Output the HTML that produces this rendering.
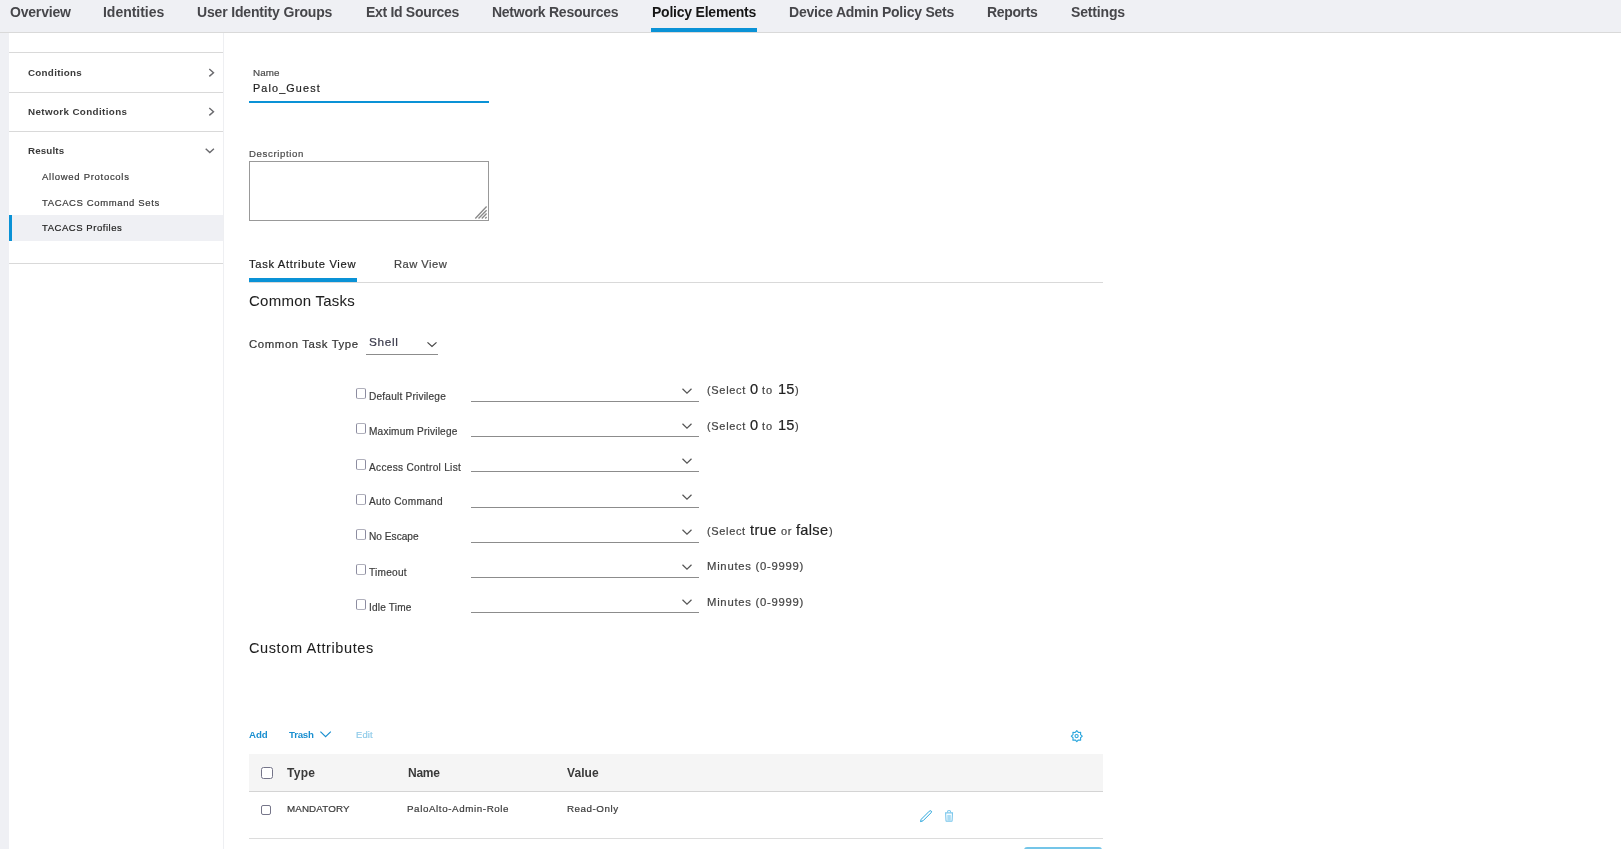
<!DOCTYPE html>
<html><head><meta charset="utf-8">
<style>
html,body{margin:0;padding:0;}
body{width:1621px;height:849px;overflow:hidden;background:#fff;position:relative;font-family:"Liberation Sans",sans-serif;}
.a{position:absolute;}
.t{position:absolute;white-space:nowrap;line-height:1;-webkit-font-smoothing:antialiased;will-change:transform;font-family:"Liberation Sans",sans-serif;}
.cb{position:absolute;box-sizing:border-box;border:1px solid #9c9cac;border-color:#b0b0bc #8c8ca0;border-radius:2px;background:#fff;}
.ul{position:absolute;height:1px;background:#8c8c8c;}
svg{position:absolute;overflow:visible;}
</style></head>
<body>
<!-- nav -->
<div class="a" style="left:0;top:0;width:1621px;height:32px;background:#eff0f4;"></div>
<div class="a" style="left:0;top:32px;width:1621px;height:1px;background:#d9d9d9;"></div>
<div class="a" style="left:651px;top:28px;width:106px;height:4px;background:#0a92d6;"></div>
<!-- left strip -->
<div class="a" style="left:0;top:33px;width:9px;height:816px;background:#eff0f4;"></div>
<!-- sidebar -->
<div class="a" style="left:223px;top:33px;width:1px;height:816px;background:#eeeff2;"></div>
<div class="a" style="left:9px;top:52px;width:214px;height:1px;background:#d9d9d9;"></div>
<div class="a" style="left:9px;top:92px;width:214px;height:1px;background:#d9d9d9;"></div>
<div class="a" style="left:9px;top:131px;width:214px;height:1px;background:#d9d9d9;"></div>
<div class="a" style="left:9px;top:263px;width:214px;height:1px;background:#d9d9d9;"></div>
<div class="a" style="left:9px;top:215px;width:214px;height:26px;background:#eff0f4;"></div>
<div class="a" style="left:9px;top:215px;width:3px;height:26px;background:#0a92d6;"></div>
<svg style="left:0;top:0" width="1" height="1">
 <polyline points="209.3,69 213.5,72.7 209.3,76.4" fill="none" stroke="#6a6a6e" stroke-width="1.4"/>
 <polyline points="209.3,108 213.5,111.7 209.3,115.4" fill="none" stroke="#6a6a6e" stroke-width="1.4"/>
 <polyline points="205.7,148.8 209.8,152.6 213.9,148.8" fill="none" stroke="#6a6a6e" stroke-width="1.4"/>
</svg>
<!-- name -->
<div class="a" style="left:249px;top:101px;width:240px;height:2px;background:#0a92d6;"></div>
<!-- description textarea -->
<div class="a" style="left:249px;top:161px;width:240px;height:60px;box-sizing:border-box;border:1px solid #999;"></div>
<svg style="left:0;top:0" width="1" height="1">
 <line x1="475.3" y1="218.5" x2="486.6" y2="206.5" stroke="#8a8a8a" stroke-width="1.35"/>
 <line x1="478.5" y1="218.5" x2="486.6" y2="210.2" stroke="#8a8a8a" stroke-width="1.35"/>
 <line x1="481.8" y1="218.5" x2="486.6" y2="213.5" stroke="#8a8a8a" stroke-width="1.35"/>
 <line x1="485.2" y1="218.5" x2="486.6" y2="217" stroke="#8a8a8a" stroke-width="1.35"/>
</svg>
<!-- tabs -->
<div class="a" style="left:249px;top:282px;width:854px;height:1px;background:#d9d9d9;"></div>
<div class="a" style="left:249px;top:278px;width:108px;height:4px;background:#0a92d6;"></div>
<!-- shell select -->
<div class="ul" style="left:366px;top:354px;width:72px;"></div>
<svg style="left:0;top:0" width="1" height="1">
 <polyline points="427.5,342.4 432,346.4 436.5,342.4" fill="none" stroke="#444" stroke-width="1.2"/>
</svg>
<div class="cb" style="left:356px;top:388px;width:10px;height:11px;"></div>
<div class="ul" style="left:471px;top:401px;width:228px;"></div>
<svg style="left:0;top:0" width="1" height="1"><polyline points="682.5,388.8 687,393.1 691.5,388.8" fill="none" stroke="#555" stroke-width="1.2"/></svg>
<div class="cb" style="left:356px;top:423px;width:10px;height:11px;"></div>
<div class="ul" style="left:471px;top:436px;width:228px;"></div>
<svg style="left:0;top:0" width="1" height="1"><polyline points="682.5,423.8 687,428.1 691.5,423.8" fill="none" stroke="#555" stroke-width="1.2"/></svg>
<div class="cb" style="left:356px;top:459px;width:10px;height:11px;"></div>
<div class="ul" style="left:471px;top:471px;width:228px;"></div>
<svg style="left:0;top:0" width="1" height="1"><polyline points="682.5,458.8 687,463.1 691.5,458.8" fill="none" stroke="#555" stroke-width="1.2"/></svg>
<div class="cb" style="left:356px;top:494px;width:10px;height:11px;"></div>
<div class="ul" style="left:471px;top:507px;width:228px;"></div>
<svg style="left:0;top:0" width="1" height="1"><polyline points="682.5,494.8 687,499.1 691.5,494.8" fill="none" stroke="#555" stroke-width="1.2"/></svg>
<div class="cb" style="left:356px;top:529px;width:10px;height:11px;"></div>
<div class="ul" style="left:471px;top:542px;width:228px;"></div>
<svg style="left:0;top:0" width="1" height="1"><polyline points="682.5,529.8 687,534.1 691.5,529.8" fill="none" stroke="#555" stroke-width="1.2"/></svg>
<div class="cb" style="left:356px;top:564px;width:10px;height:11px;"></div>
<div class="ul" style="left:471px;top:577px;width:228px;"></div>
<svg style="left:0;top:0" width="1" height="1"><polyline points="682.5,564.8 687,569.1 691.5,564.8" fill="none" stroke="#555" stroke-width="1.2"/></svg>
<div class="cb" style="left:356px;top:599px;width:10px;height:11px;"></div>
<div class="ul" style="left:471px;top:612px;width:228px;"></div>
<svg style="left:0;top:0" width="1" height="1"><polyline points="682.5,599.8 687,604.1 691.5,599.8" fill="none" stroke="#555" stroke-width="1.2"/></svg>

<!-- toolbar -->
<svg style="left:0;top:0" width="1" height="1">
 <polyline points="320.4,731.6 325.6,736.6 330.8,731.6" fill="none" stroke="#1a8fd0" stroke-width="1.2"/>
</svg>
<svg style="left:1070px;top:729px" width="14" height="14" viewBox="0 0 14 14">
 <path d="M6.80,1.70 L8.35,3.46 L10.69,3.31 L10.54,5.65 L12.30,7.20 L10.54,8.75 L10.69,11.09 L8.35,10.94 L6.80,12.70 L5.25,10.94 L2.91,11.09 L3.06,8.75 L1.30,7.20 L3.06,5.65 L2.91,3.31 L5.25,3.46 Z" fill="none" stroke="#2aa6dd" stroke-width="1.1" stroke-linejoin="round"/>
 <circle cx="6.6" cy="7.1" r="1.6" fill="none" stroke="#2aa6dd" stroke-width="1.1"/>
</svg>
<!-- table -->
<div class="a" style="left:249px;top:754px;width:854px;height:37px;background:#f5f5f5;"></div>
<div class="a" style="left:249px;top:791px;width:854px;height:1px;background:#d4d4d4;"></div>
<div class="a" style="left:249px;top:838px;width:854px;height:1px;background:#dcdcdc;"></div>
<div class="cb" style="left:261px;top:767px;width:12px;height:12px;border:1.3px solid #747489;border-radius:2.5px;"></div>
<div class="cb" style="left:261px;top:805px;width:10px;height:10px;border:1.2px solid #76768a;"></div>
<svg style="left:919px;top:809px" width="15" height="14" viewBox="0 0 15 14">
 <path d="M2.2,10.3 L10.3,2.2 Q11.2,1.3 12.2,2 Q12.9,2.8 12.1,3.7 L4,11.8 L1.5,12.6 Z" fill="none" stroke="#2aa6dd" stroke-width="1"/>
</svg>
<svg style="left:944px;top:809px" width="10" height="14" viewBox="0 0 10 14">
 <path d="M3.4,3.4 Q3.4,1.5 5.05,1.5 Q6.7,1.5 6.7,3.4" fill="none" stroke="#7cc7ec" stroke-width="1.1"/>
 <path d="M1.6,3.9 L8.5,3.9 L8.1,11.6 Q8,12.3 7.3,12.3 L2.8,12.3 Q2.1,12.3 2,11.6 Z" fill="none" stroke="#7cc7ec" stroke-width="1.1"/>
 <rect x="3.3" y="5.9" width="3.5" height="6" fill="#a9dbf3"/>
</svg>
<div class="a" style="left:1024px;top:847px;width:78px;height:10px;background:#74c5e8;border-radius:3px;"></div>
<div class="t" style="left:9.60px;top:5.45px;font-size:14px;font-weight:700;color:#46464a;letter-spacing:-0.196px;-webkit-text-stroke:0px currentColor;">Overview</div>
<div class="t" style="left:103.30px;top:5.45px;font-size:14px;font-weight:700;color:#46464a;letter-spacing:-0.019px;-webkit-text-stroke:0px currentColor;">Identities</div>
<div class="t" style="left:197.40px;top:5.45px;font-size:14px;font-weight:700;color:#46464a;letter-spacing:-0.162px;-webkit-text-stroke:0px currentColor;">User Identity Groups</div>
<div class="t" style="left:365.50px;top:5.45px;font-size:14px;font-weight:700;color:#46464a;letter-spacing:-0.305px;-webkit-text-stroke:0px currentColor;">Ext Id Sources</div>
<div class="t" style="left:491.70px;top:5.45px;font-size:14px;font-weight:700;color:#46464a;letter-spacing:-0.264px;-webkit-text-stroke:0px currentColor;">Network Resources</div>
<div class="t" style="left:651.50px;top:5.45px;font-size:14px;font-weight:700;color:#161616;letter-spacing:-0.221px;-webkit-text-stroke:0px currentColor;">Policy Elements</div>
<div class="t" style="left:788.50px;top:5.45px;font-size:14px;font-weight:700;color:#46464a;letter-spacing:-0.234px;-webkit-text-stroke:0px currentColor;">Device Admin Policy Sets</div>
<div class="t" style="left:987.00px;top:5.45px;font-size:14px;font-weight:700;color:#46464a;letter-spacing:-0.352px;-webkit-text-stroke:0px currentColor;">Reports</div>
<div class="t" style="left:1070.70px;top:5.45px;font-size:14px;font-weight:700;color:#46464a;letter-spacing:-0.163px;-webkit-text-stroke:0px currentColor;">Settings</div>
<div class="t" style="left:27.80px;top:68.20px;font-size:9.8px;font-weight:700;color:#3a3a3a;letter-spacing:0.277px;-webkit-text-stroke:0px currentColor;">Conditions</div>
<div class="t" style="left:27.80px;top:107.10px;font-size:9.8px;font-weight:700;color:#3a3a3a;letter-spacing:0.378px;-webkit-text-stroke:0px currentColor;">Network Conditions</div>
<div class="t" style="left:27.70px;top:146.30px;font-size:9.8px;font-weight:700;color:#3a3a3a;letter-spacing:0.127px;-webkit-text-stroke:0px currentColor;">Results</div>
<div class="t" style="left:42.10px;top:171.96px;font-size:9.5px;font-weight:400;color:#3a3a3a;letter-spacing:0.715px;-webkit-text-stroke:0.2px currentColor;">Allowed Protocols</div>
<div class="t" style="left:42.10px;top:197.56px;font-size:9.5px;font-weight:400;color:#3a3a3a;letter-spacing:0.623px;-webkit-text-stroke:0.2px currentColor;">TACACS Command Sets</div>
<div class="t" style="left:42.10px;top:222.86px;font-size:9.5px;font-weight:400;color:#222;letter-spacing:0.550px;-webkit-text-stroke:0.2px currentColor;">TACACS Profiles</div>
<div class="t" style="left:252.60px;top:67.70px;font-size:9.8px;font-weight:400;color:#4a4a4a;letter-spacing:0.105px;-webkit-text-stroke:0.2px currentColor;">Name</div>
<div class="t" style="left:252.60px;top:82.86px;font-size:10.8px;font-weight:400;color:#1e1e1e;letter-spacing:1.142px;-webkit-text-stroke:0.2px currentColor;">Palo_Guest</div>
<div class="t" style="left:248.70px;top:148.87px;font-size:9.6px;font-weight:400;color:#4a4a4a;letter-spacing:0.635px;-webkit-text-stroke:0.2px currentColor;">Description</div>
<div class="t" style="left:248.50px;top:258.62px;font-size:11.2px;font-weight:400;color:#1e1e1e;letter-spacing:0.675px;-webkit-text-stroke:0.2px currentColor;">Task Attribute View</div>
<div class="t" style="left:393.80px;top:258.62px;font-size:11.2px;font-weight:400;color:#444;letter-spacing:0.463px;-webkit-text-stroke:0.2px currentColor;">Raw View</div>
<div class="t" style="left:248.50px;top:293.30px;font-size:15px;font-weight:400;color:#1e1e1e;letter-spacing:0.240px;-webkit-text-stroke:0.2px currentColor;-webkit-text-stroke:0.05px currentColor;">Common Tasks</div>
<div class="t" style="left:248.50px;top:339.15px;font-size:11.4px;font-weight:400;color:#333;letter-spacing:0.592px;-webkit-text-stroke:0.2px currentColor;">Common Task Type</div>
<div class="t" style="left:369.20px;top:336.91px;font-size:11.8px;font-weight:400;color:#39394a;letter-spacing:0.672px;-webkit-text-stroke:0.2px currentColor;">Shell</div>
<div class="t" style="left:369.20px;top:392.05px;font-size:10.1px;font-weight:400;color:#3c3c3c;letter-spacing:0.207px;-webkit-text-stroke:0.2px currentColor;">Default Privilege</div>
<div class="t" style="left:369.20px;top:427.25px;font-size:10.1px;font-weight:400;color:#3c3c3c;letter-spacing:0.191px;-webkit-text-stroke:0.2px currentColor;">Maximum Privilege</div>
<div class="t" style="left:369.20px;top:462.55px;font-size:10.1px;font-weight:400;color:#3c3c3c;letter-spacing:0.301px;-webkit-text-stroke:0.2px currentColor;">Access Control List</div>
<div class="t" style="left:369.20px;top:497.05px;font-size:10.1px;font-weight:400;color:#3c3c3c;letter-spacing:0.317px;-webkit-text-stroke:0.2px currentColor;">Auto Command</div>
<div class="t" style="left:369.20px;top:532.25px;font-size:10.1px;font-weight:400;color:#3c3c3c;letter-spacing:0.030px;-webkit-text-stroke:0.2px currentColor;">No Escape</div>
<div class="t" style="left:369.20px;top:567.95px;font-size:10.1px;font-weight:400;color:#3c3c3c;letter-spacing:0.253px;-webkit-text-stroke:0.2px currentColor;">Timeout</div>
<div class="t" style="left:369.20px;top:603.05px;font-size:10.1px;font-weight:400;color:#3c3c3c;letter-spacing:0.185px;-webkit-text-stroke:0.2px currentColor;">Idle Time</div>
<div class="t" style="left:248.60px;top:640.73px;font-size:14.5px;font-weight:400;color:#1e1e1e;letter-spacing:0.613px;-webkit-text-stroke:0.2px currentColor;-webkit-text-stroke:0.05px currentColor;">Custom Attributes</div>
<div class="t" style="left:248.60px;top:730.09px;font-size:9.7px;font-weight:700;color:#1a8fd0;letter-spacing:-0.057px;-webkit-text-stroke:0px currentColor;">Add</div>
<div class="t" style="left:289.30px;top:730.09px;font-size:9.7px;font-weight:700;color:#1a8fd0;letter-spacing:-0.232px;-webkit-text-stroke:0px currentColor;">Trash</div>
<div class="t" style="left:355.60px;top:730.34px;font-size:9.4px;font-weight:400;color:#8fcbe9;letter-spacing:0.150px;-webkit-text-stroke:0.2px currentColor;">Edit</div>
<div class="t" style="left:287.30px;top:766.94px;font-size:12px;font-weight:700;color:#3a3a3a;letter-spacing:0.286px;-webkit-text-stroke:0px currentColor;">Type</div>
<div class="t" style="left:407.50px;top:766.94px;font-size:12px;font-weight:700;color:#3a3a3a;letter-spacing:-0.270px;-webkit-text-stroke:0px currentColor;">Name</div>
<div class="t" style="left:567.00px;top:766.94px;font-size:12px;font-weight:700;color:#3a3a3a;letter-spacing:0.080px;-webkit-text-stroke:0px currentColor;">Value</div>
<div class="t" style="left:287.30px;top:803.80px;font-size:9.8px;font-weight:400;color:#3a3a3a;letter-spacing:0.115px;-webkit-text-stroke:0.2px currentColor;">MANDATORY</div>
<div class="t" style="left:407.00px;top:803.80px;font-size:9.8px;font-weight:400;color:#3a3a3a;letter-spacing:0.590px;-webkit-text-stroke:0.2px currentColor;">PaloAlto-Admin-Role</div>
<div class="t" style="left:567.00px;top:803.80px;font-size:9.8px;font-weight:400;color:#3a3a3a;letter-spacing:0.534px;-webkit-text-stroke:0.2px currentColor;">Read-Only</div>
<div class="t" style="left:706.80px;top:384.69px;font-size:11px;font-weight:400;color:#444;letter-spacing:0.687px;-webkit-text-stroke:0.2px currentColor;">(Select</div>
<div class="t" style="left:749.90px;top:381.64px;font-size:14.6px;font-weight:400;color:#222;letter-spacing:0.000px;-webkit-text-stroke:0.2px currentColor;">0</div>
<div class="t" style="left:762.00px;top:384.69px;font-size:11px;font-weight:400;color:#444;letter-spacing:0.844px;-webkit-text-stroke:0.2px currentColor;">to</div>
<div class="t" style="left:778.10px;top:381.64px;font-size:14.6px;font-weight:400;color:#222;letter-spacing:0.084px;-webkit-text-stroke:0.2px currentColor;">15</div>
<div class="t" style="left:794.80px;top:384.69px;font-size:11px;font-weight:400;color:#444;letter-spacing:0.000px;-webkit-text-stroke:0.2px currentColor;">)</div>
<div class="t" style="left:706.80px;top:420.69px;font-size:11px;font-weight:400;color:#444;letter-spacing:0.687px;-webkit-text-stroke:0.2px currentColor;">(Select</div>
<div class="t" style="left:749.90px;top:417.64px;font-size:14.6px;font-weight:400;color:#222;letter-spacing:0.000px;-webkit-text-stroke:0.2px currentColor;">0</div>
<div class="t" style="left:762.00px;top:420.69px;font-size:11px;font-weight:400;color:#444;letter-spacing:0.844px;-webkit-text-stroke:0.2px currentColor;">to</div>
<div class="t" style="left:778.10px;top:417.64px;font-size:14.6px;font-weight:400;color:#222;letter-spacing:0.084px;-webkit-text-stroke:0.2px currentColor;">15</div>
<div class="t" style="left:794.80px;top:420.69px;font-size:11px;font-weight:400;color:#444;letter-spacing:0.000px;-webkit-text-stroke:0.2px currentColor;">)</div>
<div class="t" style="left:706.80px;top:525.59px;font-size:11px;font-weight:400;color:#444;letter-spacing:0.653px;-webkit-text-stroke:0.2px currentColor;">(Select</div>
<div class="t" style="left:749.70px;top:522.54px;font-size:14.6px;font-weight:400;color:#222;letter-spacing:0.423px;-webkit-text-stroke:0.2px currentColor;">true</div>
<div class="t" style="left:780.70px;top:525.59px;font-size:11px;font-weight:400;color:#444;letter-spacing:0.682px;-webkit-text-stroke:0.2px currentColor;">or</div>
<div class="t" style="left:795.90px;top:522.54px;font-size:14.6px;font-weight:400;color:#222;letter-spacing:0.297px;-webkit-text-stroke:0.2px currentColor;">false</div>
<div class="t" style="left:829.20px;top:525.59px;font-size:11px;font-weight:400;color:#444;letter-spacing:0.000px;-webkit-text-stroke:0.2px currentColor;">)</div>
<div class="t" style="left:706.70px;top:560.83px;font-size:11.3px;font-weight:400;color:#444;letter-spacing:0.725px;-webkit-text-stroke:0.2px currentColor;">Minutes (0-9999)</div>
<div class="t" style="left:706.70px;top:596.63px;font-size:11.3px;font-weight:400;color:#444;letter-spacing:0.725px;-webkit-text-stroke:0.2px currentColor;">Minutes (0-9999)</div>
</body></html>
